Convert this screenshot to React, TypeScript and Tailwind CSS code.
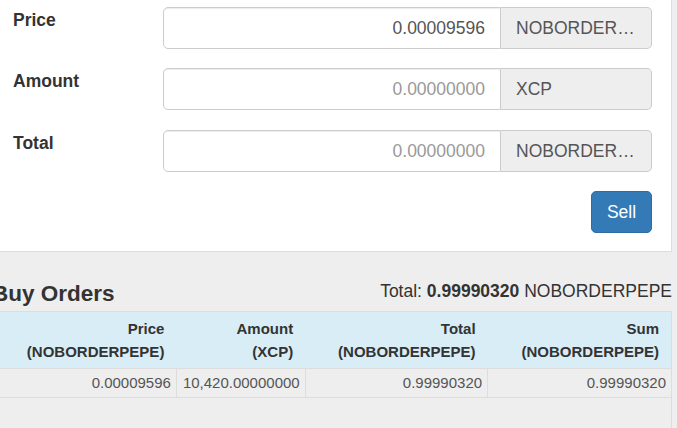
import React from 'react';

const fields = [
  { label: 'Price', value: '0.00009596', unit: 'NOBORDERPEPE', mt: 'mt-0' },
  { label: 'Amount', value: '', unit: 'XCP', mt: 'mt-[19px]' },
  { label: 'Total', value: '', unit: 'NOBORDERPEPE', mt: 'mt-[20px]' },
];

function Field({ label, value, unit, mt }: { label: string; value: string; unit: string; mt: string }) {
  return (
    <div className={`flex ${mt}`}>
      <label className="w-[150px] pt-[1px] text-[17.5px] leading-[25px] font-bold text-[#333]">{label}</label>
      <div className="flex flex-1 h-[42px]">
        <input
          readOnly
          defaultValue={value}
          placeholder="0.00000000"
          className="flex-1 min-w-0 h-full border border-[#ccc] rounded-l-[5px] bg-white px-[15px] text-right text-[17.5px] text-[#555] placeholder:text-[#999] shadow-[inset_0_1px_1px_rgba(0,0,0,0.075)] outline-none"
        />
        <div className="w-[151px] h-full flex items-center border border-l-0 border-[#ccc] rounded-r-[5px] bg-[#eeeeee] px-[15px] text-[17.5px] text-[#555]">
          <span className="block w-full overflow-hidden whitespace-nowrap text-ellipsis">{unit}</span>
        </div>
      </div>
    </div>
  );
}

const cols = [
  { top: 'Price', bottom: '(NOBORDERPEPE)', w: 'w-[185px]', val: '0.00009596' },
  { top: 'Amount', bottom: '(XCP)', w: 'w-[127px]', val: '10,420.00000000' },
  { top: 'Total', bottom: '(NOBORDERPEPE)', w: 'w-[183px]', val: '0.99990320' },
  { top: 'Sum', bottom: '(NOBORDERPEPE)', w: 'w-[184px]', val: '0.99990320' },
];

export default function App() {
  return (
    <div className="w-[677px] h-[428px] overflow-hidden bg-[#eeeeee] font-['Liberation_Sans',Arial,sans-serif]">
      <div className="-ml-[8px] w-[680px]">
        {/* sell form panel */}
        <div className="bg-white border-r border-b border-[#dddddd] pl-[21px] pr-[19px] pt-[7px] pb-[18px]">
          {fields.map((f) => (
            <Field key={f.label} {...f} />
          ))}
          <div className="flex justify-end mt-[19px]">
            <button className="h-[42px] w-[61px] rounded-[5px] border border-[#2e6da4] bg-[#337ab7] text-[17.5px] text-white">
              Sell
            </button>
          </div>
        </div>

        {/* buy orders */}
        <div className="flex justify-between items-start h-[59px]">
          <h4 className="mt-[30px] text-[22.5px] leading-[24.75px] font-bold text-[#333]">Buy Orders</h4>
          <div className="mt-[27px] text-[17.5px] leading-[25px] text-[#333]">
            Total: <span className="font-bold">0.99990320</span> NOBORDERPEPE
          </div>
        </div>

        <div className="h-[200px] border-t border-r border-[#dddddd]">
          <table className="table-fixed border-collapse text-[15px]">
            <thead>
              <tr className="bg-[#d9edf7]">
                {cols.map((c) => (
                  <th
                    key={c.top + c.w}
                    className={`${c.w} h-[56px] pr-[12px] text-right align-middle font-bold leading-[23px] text-[#333]`}
                  >
                    <div>{c.top}</div>
                    <div>{c.bottom}</div>
                  </th>
                ))}
              </tr>
            </thead>
            <tbody>
              <tr className="border-t border-b border-[#dddddd]">
                {cols.map((c, i) => (
                  <td
                    key={c.top + i}
                    className={`h-[29px] pl-[6px] pr-[5px] text-right leading-[20px] text-[#555] ${i < 3 ? 'border-r border-[#dddddd]' : ''}`}
                  >
                    {c.val}
                  </td>
                ))}
              </tr>
            </tbody>
          </table>
        </div>
      </div>
    </div>
  );
}
